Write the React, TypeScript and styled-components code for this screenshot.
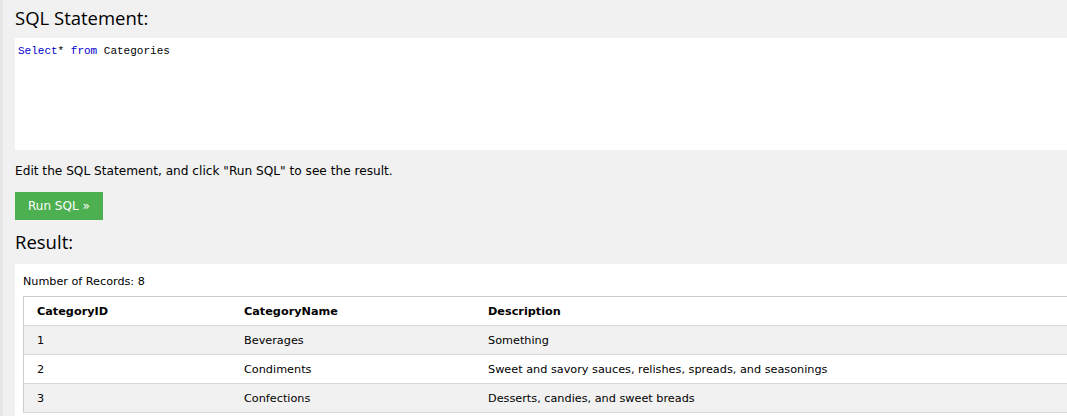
import React from 'react'
import styled, { createGlobalStyle } from 'styled-components'

interface Category {
    id: number;
    name: string;
    description: string;
}

const categories: Category[] = [
    { id: 1, name: 'Beverages', description: 'Something' },
    { id: 2, name: 'Condiments', description: 'Sweet and savory sauces, relishes, spreads, and seasonings' },
    { id: 3, name: 'Confections', description: 'Desserts, candies, and sweet breads' },
]

const GlobalStyle = createGlobalStyle`
    html, body {
        margin: 0;
        padding: 0;
        background: #e7e7e7;
        overflow: hidden;
    }
`

const App = () => {
  return (
    <>
        <GlobalStyle/>
        <PageStyle>
            <Heading $top={5} $bottom={6}>SQL Statement:</Heading>
            <CodeBox>
                <Keyword>Select</Keyword>* <Keyword>from</Keyword> Categories
            </CodeBox>
            <Hint>Edit the SQL Statement, and click "Run SQL" to see the result.</Hint>
            <RunButton>Run SQL »</RunButton>
            <Heading $top={9} $bottom={9}>Result:</Heading>
            <ResultPanel>
                <p className='count'>Number of Records: 8</p>
                <table>
                    <thead>
                        <tr>
                            <th className='id'>CategoryID</th>
                            <th className='name'>CategoryName</th>
                            <th>Description</th>
                        </tr>
                    </thead>
                    <tbody>
                        {categories.map((c) => (
                            <tr key={c.id}>
                                <td>{c.id}</td>
                                <td>{c.name}</td>
                                <td>{c.description}</td>
                            </tr>
                        ))}
                    </tbody>
                </table>
            </ResultPanel>
        </PageStyle>
    </>
  )
}

const PageStyle = styled.div`
    margin-left: 3px;
    width: 1120px;
    height: 416px;
    box-sizing: border-box;
    background: #f1f1f1;
    padding: 0 0 0 12px;
    display: flex;
    flex-direction: column;
    align-items: flex-start;
    overflow: hidden;
    font-family: "DejaVu Sans", Verdana, sans-serif;
    color: #000;
`

const Heading = styled.h2<{ $top: number; $bottom: number }>`
    font-family: "Open Sans", "Noto Sans", sans-serif;
    font-weight: 400;
    font-size: 18.5px;
    line-height: 26px;
    margin: ${({ $top }) => $top}px 0 ${({ $bottom }) => $bottom}px 0;
    color: #000;
`

const CodeBox = styled.div`
    align-self: stretch;
    box-sizing: border-box;
    height: 112px;
    margin-top: 1px;
    background: #fff;
    padding: 6px 3px;
    font-family: "Liberation Mono", monospace;
    font-size: 11px;
    line-height: 14px;
    color: #000;
    white-space: pre;
`

const Keyword = styled.span`
    color: mediumblue;
`

const Hint = styled.p`
    font-size: 12.15px;
    line-height: 16px;
    margin: 13px 0 13px 0;
`

const RunButton = styled.button`
    border: none;
    background: #4caf50;
    color: #fff;
    font-family: "DejaVu Sans", Verdana, sans-serif;
    font-size: 12px;
    height: 28px;
    padding: 0 13px;
    cursor: pointer;
`

const ResultPanel = styled.div`
    align-self: stretch;
    background: #fff;
    padding: 0 0 0 8px;
    flex: 1;

    .count {
        font-size: 11.2px;
        line-height: 14px;
        margin: 0;
        padding: 11px 0 7px 0;
    }

    table {
        border-collapse: collapse;
        width: 1200px;
        border: 1px solid #ccc;
        font-size: 11.25px;
    }

    th, td {
        text-align: left;
        padding: 0 0 0 13px;
        height: 28px;
        border-bottom: 1px solid #d6d6d6;
    }

    th {
        font-weight: 700;
    }

    .id {
        width: 194px;
    }

    .name {
        width: 231px;
    }

    tbody tr:nth-child(odd) {
        background: #f1f1f1;
    }
`

export default App
